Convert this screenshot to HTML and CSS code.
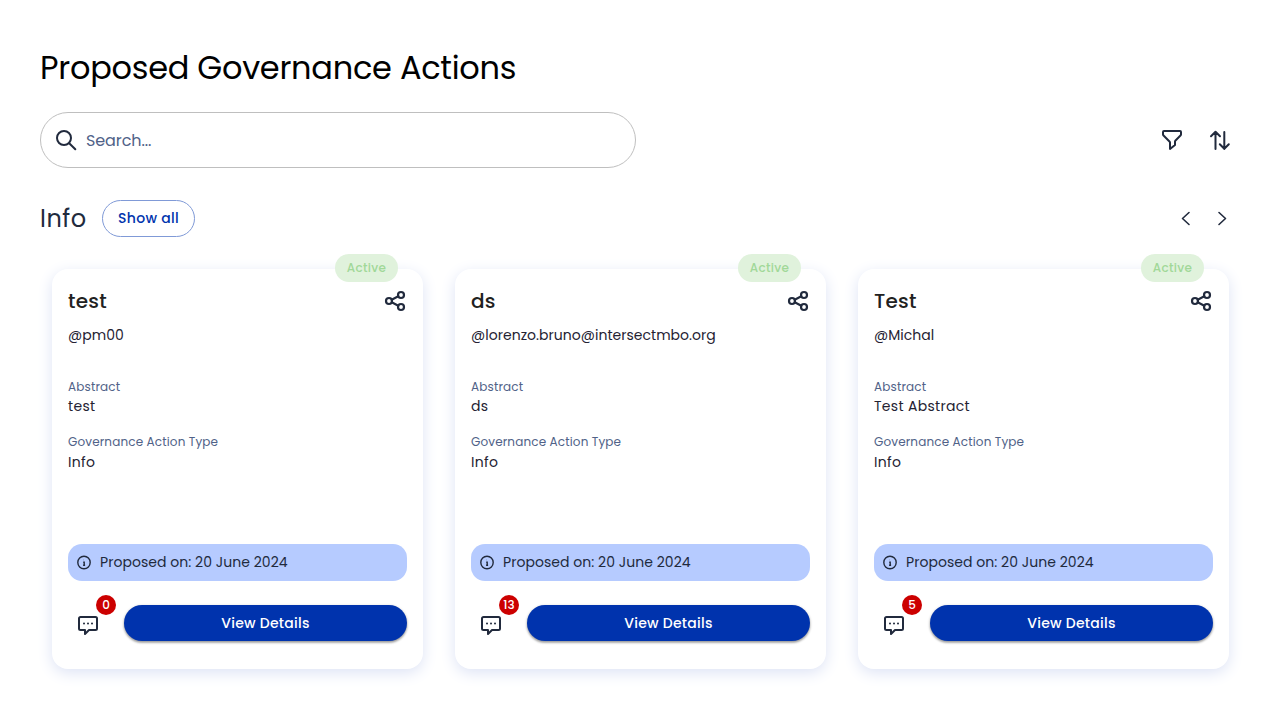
FILE: index.html
```html
<!DOCTYPE html>
<html lang="en">
<head>
<meta charset="utf-8">
<title>Proposed Governance Actions</title>
<link rel="stylesheet" href="styles.css">
</head>
<body>
<svg class="sprite" aria-hidden="true">
  <symbol id="share" viewBox="0 0 24 24"><circle cx="6" cy="12" r="3"/><circle cx="18" cy="6" r="3"/><circle cx="18" cy="18" r="3"/><path d="M8.7 10.700l6.600-3.400M8.700 13.300l6.600 3.400"/></symbol>
  <symbol id="comment" viewBox="0 0 24 24"><path d="M4.500 4h15A1.500 1.500 0 0 1 21 5.500v10a1.500 1.500 0 0 1-1.500 1.500H13l-4 4v-4H4.500A1.500 1.500 0 0 1 3 15.500v-10A1.500 1.500 0 0 1 4.500 4z"/><path d="M8 10.500h.01M12 10.500h.01M16 10.500h.01"/></symbol>
  <symbol id="info" viewBox="0 0 16 16"><circle cx="8" cy="7.500" r="6.200"/><path d="M7.200 7.200h1v2.800M7.100 10.200h2M7.800 4.900h.2"/></symbol>
</svg>
<main class="page">
  <h1 class="page-title">Proposed Governance Actions</h1>
  <div class="toolbar">
    <label class="search">
      <svg class="icon" viewBox="0 0 24 24"><circle cx="10" cy="10" r="7"/><path d="M15.200 15.200L21.300 21.300"/></svg>
      <span class="search-text">Search...</span>
    </label>
    <div class="tools">
      <svg class="icon" viewBox="0 0 24 24"><path d="M4 3h16a1 1 0 0 1 1 1v2.600a1 1 0 0 1-.3.7l-5.400 5.400a1 1 0 0 0-.3.7V17l-5 4v-6.600a1 1 0 0 0-.3-.7L3.300 7.300A1 1 0 0 1 3 6.600V4a1 1 0 0 1 1-1z"/></svg>
      <svg class="icon" viewBox="0 0 24 24"><path d="M7.500 21V4M3 8.300L7.500 3.800 12 8.300M16.300 4v17M11.800 16.200l4.500 4.500 4.500-4.500"/></svg>
    </div>
  </div>
  <div class="section-head">
    <h2 class="section-title">Info</h2>
    <button class="show-all"><span>Show all</span></button>
    <div class="pager">
      <svg class="icon chevron" viewBox="0 0 24 24"><path d="M15 5.500l-6.500 6 6.500 6"/></svg>
      <svg class="icon chevron" viewBox="0 0 24 24"><path d="M9 5.500l6.500 6-6.500 6"/></svg>
    </div>
  </div>
  <div class="cards">
    <article class="card">
      <span class="status">Active</span>
      <header class="card-head"><h3 class="card-title">test</h3><svg class="icon share"><use href="#share"/></svg></header>
      <p class="author">@pm00</p>
      <p class="label label-abstract">Abstract</p><p class="value">test</p>
      <p class="label label-type">Governance Action Type</p><p class="value value-type">Info</p>
      <div class="notice"><svg class="notice-icon"><use href="#info"/></svg><span>Proposed on: 20 June 2024</span></div>
      <footer class="card-foot"><div class="comments"><svg class="icon"><use href="#comment"/></svg><span class="count">0</span></div><button class="details">View Details</button></footer>
    </article>
    <article class="card">
      <span class="status">Active</span>
      <header class="card-head"><h3 class="card-title">ds</h3><svg class="icon share"><use href="#share"/></svg></header>
      <p class="author">@lorenzo.bruno@intersectmbo.org</p>
      <p class="label label-abstract">Abstract</p><p class="value">ds</p>
      <p class="label label-type">Governance Action Type</p><p class="value value-type">Info</p>
      <div class="notice"><svg class="notice-icon"><use href="#info"/></svg><span>Proposed on: 20 June 2024</span></div>
      <footer class="card-foot"><div class="comments"><svg class="icon"><use href="#comment"/></svg><span class="count">13</span></div><button class="details">View Details</button></footer>
    </article>
    <article class="card">
      <span class="status">Active</span>
      <header class="card-head"><h3 class="card-title">Test</h3><svg class="icon share"><use href="#share"/></svg></header>
      <p class="author">@Michal</p>
      <p class="label label-abstract">Abstract</p><p class="value">Test Abstract</p>
      <p class="label label-type">Governance Action Type</p><p class="value value-type">Info</p>
      <div class="notice"><svg class="notice-icon"><use href="#info"/></svg><span>Proposed on: 20 June 2024</span></div>
      <footer class="card-foot"><div class="comments"><svg class="icon"><use href="#comment"/></svg><span class="count">5</span></div><button class="details">View Details</button></footer>
    </article>
  </div>
</main>
</body>
</html>
```
FILE: styles.css
```css
* { box-sizing: border-box; }
body, h1, h2, h3, p { margin: 0; }
body {
  background: #fff;
  color: #212a3d;
  font-family: Poppins, Inter, "Open Sans", sans-serif;
  overflow: hidden;
}
button { font: inherit; cursor: pointer; }
.sprite { position: absolute; width: 0; height: 0; }
.page { height: 720px; padding: 48px 40px 0; }
.page-title { height: 40px; line-height: 39px; font-size: 32px; letter-spacing: -.27px; font-weight: 400; color: #000; white-space: nowrap; }
.icon { display: block; flex: none; width: 24px; height: 24px; fill: none; stroke: #212a3d; stroke-width: 2; stroke-linecap: round; stroke-linejoin: round; }
.toolbar { display: flex; align-items: center; justify-content: space-between; margin-top: 24px; height: 56px; }
.search { display: flex; align-items: center; width: 596px; height: 56px; padding-left: 13px; border: 1px solid #bfbfbf; border-radius: 28px; }
.search-text { margin-left: 8px; font-size: 16px; letter-spacing: -.1px; color: #506288; }
.tools { display: flex; gap: 24px; padding-right: 8px; }
.section-head { display: flex; align-items: center; height: 37px; margin-top: 32px; }
.section-title { width: 62px; font-size: 24px; line-height: 36px; letter-spacing: .5px; font-weight: 400; }
.show-all { width: 93px; height: 37px; padding: 0; border: 1px solid #809ad7; border-radius: 19px; background: #fff; color: #0033ad; font-size: 14px; letter-spacing: .3px; font-weight: 500; }
.pager { display: flex; gap: 12px; margin-left: auto; padding-right: 6px; }
.chevron { stroke-width: 1.6; }
.cards { display: flex; gap: 32px; padding: 32px 0 0 12px; }
.card { position: relative; display: flex; flex: none; flex-direction: column; width: 371px; height: 400px; padding: 20px 16px 0; border-radius: 16px; background: #fff; box-shadow: 0 4px 15px #dde3f5; }
.status { position: absolute; top: -15px; right: 25px; width: 63px; height: 28px; border-radius: 14px; background: #e0f2dc; color: #a1d898; font-size: 12px; letter-spacing: .3px; font-weight: 500; line-height: 28px; text-align: center; }
.card-head { display: flex; align-items: center; justify-content: space-between; height: 24px; }
.card-title { font-size: 20px; line-height: 24px; letter-spacing: .25px; font-weight: 500; color: #212121; }
.share { stroke-width: 2.2; }
.author { height: 22px; margin-top: 11px; font-size: 14px; line-height: 22px; letter-spacing: .03px; color: #242232; }
.label { height: 18px; font-size: 12px; line-height: 18px; letter-spacing: .14px; color: #506288; }
.label-abstract { margin-top: 32px; }
.label-type { margin-top: 16px; }
.value { height: 21px; font-size: 14px; line-height: 21px; letter-spacing: .3px; color: #242232; }
.value-type { margin-top: 1px; }
.notice { display: flex; align-items: center; gap: 8px; height: 37px; margin-top: auto; padding-left: 8px; border-radius: 14px; background: #b6cbff; font-size: 14px; letter-spacing: .04px; }
.notice-icon { width: 16px; height: 16px; fill: none; stroke: #212a3d; stroke-width: 1.4; }
.card-foot { display: flex; align-items: flex-start; margin: 24px 0 28px; }
.comments { position: relative; width: 56px; height: 36px; padding: 8px 8px 0; }
.count { position: absolute; top: -10px; left: 28px; width: 20px; height: 20px; border-radius: 50%; background: #cc0000; color: #fff; font-size: 12px; line-height: 20px; font-weight: 500; text-align: center; }
.details { flex: 1; height: 36px; padding: 0; border: 0; border-radius: 18px; background: #0033ad; color: #fff; font-size: 14px; letter-spacing: .25px; font-weight: 500; box-shadow: 0 1px 3px rgba(0,0,0,.3), 0 2px 2px rgba(0,0,0,.2); }
```
